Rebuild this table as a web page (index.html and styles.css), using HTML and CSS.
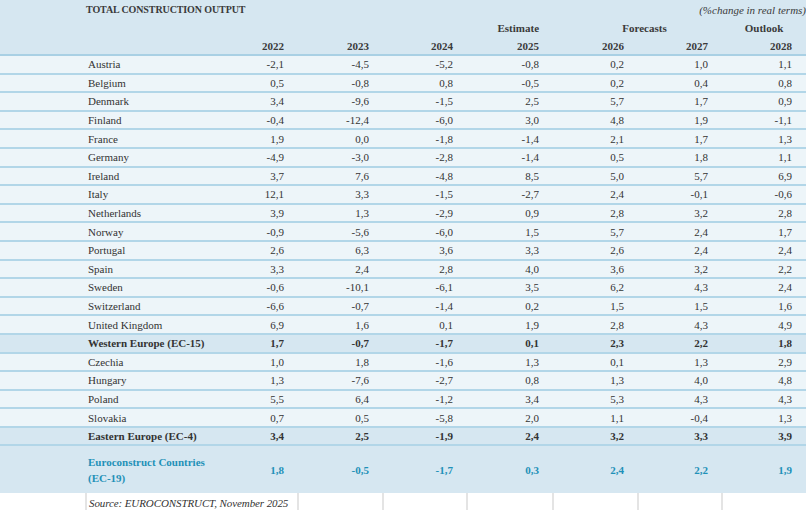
FILE: index.html
```html
<!DOCTYPE html>
<html>
<head>
<meta charset="utf-8">
<link rel="stylesheet" href="styles.css">
</head>
<body>
<table class="tbl">
  <colgroup>
    <col class="c-pad"><col class="c-label">
    <col class="c-85"><col class="c-85"><col class="c-84"><col class="c-86"><col class="c-85"><col class="c-84"><col class="c-84">
  </colgroup>
  <thead>
    <tr class="h1">
      <th></th>
      <th class="title" colspan="4">TOTAL CONSTRUCTION OUTPUT</th>
      <th colspan="4" class="unit">(%change in real terms)</th>
    </tr>
    <tr class="h2">
      <th></th><th></th><th></th><th></th><th></th>
      <th class="num">Estimate</th>
      <th colspan="2" class="fc">Forecasts</th>
      <th class="ol">Outlook</th>
    </tr>
    <tr class="h3">
      <th></th><th></th>
      <th class="num">2022</th><th class="num">2023</th><th class="num">2024</th><th class="num">2025</th><th class="num">2026</th><th class="num">2027</th><th class="num">2028</th>
    </tr>
  </thead>
  <tbody>
    <tr><td></td><td class="lbl">Austria</td><td>-2,1</td><td>-4,5</td><td>-5,2</td><td>-0,8</td><td>0,2</td><td>1,0</td><td>1,1</td></tr>
    <tr><td></td><td class="lbl">Belgium</td><td>0,5</td><td>-0,8</td><td>0,8</td><td>-0,5</td><td>0,2</td><td>0,4</td><td>0,8</td></tr>
    <tr><td></td><td class="lbl">Denmark</td><td>3,4</td><td>-9,6</td><td>-1,5</td><td>2,5</td><td>5,7</td><td>1,7</td><td>0,9</td></tr>
    <tr><td></td><td class="lbl">Finland</td><td>-0,4</td><td>-12,4</td><td>-6,0</td><td>3,0</td><td>4,8</td><td>1,9</td><td>-1,1</td></tr>
    <tr><td></td><td class="lbl">France</td><td>1,9</td><td>0,0</td><td>-1,8</td><td>-1,4</td><td>2,1</td><td>1,7</td><td>1,3</td></tr>
    <tr><td></td><td class="lbl">Germany</td><td>-4,9</td><td>-3,0</td><td>-2,8</td><td>-1,4</td><td>0,5</td><td>1,8</td><td>1,1</td></tr>
    <tr><td></td><td class="lbl">Ireland</td><td>3,7</td><td>7,6</td><td>-4,8</td><td>8,5</td><td>5,0</td><td>5,7</td><td>6,9</td></tr>
    <tr><td></td><td class="lbl">Italy</td><td>12,1</td><td>3,3</td><td>-1,5</td><td>-2,7</td><td>2,4</td><td>-0,1</td><td>-0,6</td></tr>
    <tr><td></td><td class="lbl">Netherlands</td><td>3,9</td><td>1,3</td><td>-2,9</td><td>0,9</td><td>2,8</td><td>3,2</td><td>2,8</td></tr>
    <tr><td></td><td class="lbl">Norway</td><td>-0,9</td><td>-5,6</td><td>-6,0</td><td>1,5</td><td>5,7</td><td>2,4</td><td>1,7</td></tr>
    <tr><td></td><td class="lbl">Portugal</td><td>2,6</td><td>6,3</td><td>3,6</td><td>3,3</td><td>2,6</td><td>2,4</td><td>2,4</td></tr>
    <tr><td></td><td class="lbl">Spain</td><td>3,3</td><td>2,4</td><td>2,8</td><td>4,0</td><td>3,6</td><td>3,2</td><td>2,2</td></tr>
    <tr><td></td><td class="lbl">Sweden</td><td>-0,6</td><td>-10,1</td><td>-6,1</td><td>3,5</td><td>6,2</td><td>4,3</td><td>2,4</td></tr>
    <tr><td></td><td class="lbl">Switzerland</td><td>-6,6</td><td>-0,7</td><td>-1,4</td><td>0,2</td><td>1,5</td><td>1,5</td><td>1,6</td></tr>
    <tr><td></td><td class="lbl">United Kingdom</td><td>6,9</td><td>1,6</td><td>0,1</td><td>1,9</td><td>2,8</td><td>4,3</td><td>4,9</td></tr>
    <tr class="sub"><td></td><td class="lbl">Western Europe (EC-15)</td><td>1,7</td><td>-0,7</td><td>-1,7</td><td>0,1</td><td>2,3</td><td>2,2</td><td>1,8</td></tr>
    <tr><td></td><td class="lbl">Czechia</td><td>1,0</td><td>1,8</td><td>-1,6</td><td>1,3</td><td>0,1</td><td>1,3</td><td>2,9</td></tr>
    <tr><td></td><td class="lbl">Hungary</td><td>1,3</td><td>-7,6</td><td>-2,7</td><td>0,8</td><td>1,3</td><td>4,0</td><td>4,8</td></tr>
    <tr><td></td><td class="lbl">Poland</td><td>5,5</td><td>6,4</td><td>-1,2</td><td>3,4</td><td>5,3</td><td>4,3</td><td>4,3</td></tr>
    <tr><td></td><td class="lbl">Slovakia</td><td>0,7</td><td>0,5</td><td>-5,8</td><td>2,0</td><td>1,1</td><td>-0,4</td><td>1,3</td></tr>
    <tr class="sub"><td></td><td class="lbl">Eastern Europe (EC-4)</td><td>3,4</td><td>2,5</td><td>-1,9</td><td>2,4</td><td>3,2</td><td>3,3</td><td>3,9</td></tr>
    <tr class="total"><td></td><td class="lbl">Euroconstruct Countries<br>(EC-19)</td><td>1,8</td><td>-0,5</td><td>-1,7</td><td>0,3</td><td>2,4</td><td>2,2</td><td>1,9</td></tr>
  </tbody>
  <tfoot>
    <tr class="src">
      <td></td>
      <td colspan="2" class="srctext">Source: EUROCONSTRUCT, November 2025</td>
      <td></td><td></td><td></td><td></td><td></td><td></td>
    </tr>
  </tfoot>
</table>
</body>
</html>
```

FILE: styles.css
```css
html, body {
  margin: 0;
  padding: 0;
  background: #ffffff;
}

.tbl {
  width: 806px;
  border-collapse: collapse;
  table-layout: fixed;
  font-family: "Liberation Serif", "Times New Roman", serif;
  font-size: 11px;
  color: #333333;
}

.c-pad { width: 86px; }
.c-label { width: 127px; }
.c-85 { width: 85px; }
.c-84 { width: 84px; }
.c-86 { width: 86px; }

.tbl th, .tbl td {
  padding: 0;
  white-space: nowrap;
}

thead tr {
  background: #d6e7f1;
}

thead th {
  font-weight: bold;
  color: #3a3a3a;
}

.h1 { height: 19px; }
.h2 { height: 18px; }
.h3 { height: 18px; }
.h3 th { border-bottom: 2px solid #a9d0e4; vertical-align: middle; }

.title {
  text-align: left;
  padding-left: 2px;
  font-size: 10px;
  letter-spacing: -0.1px;
  vertical-align: middle;
}

.unit {
  text-align: right;
  font-weight: normal;
  font-style: italic;
  padding-right: 3px;
  vertical-align: middle;
}

.num {
  text-align: right;
  padding-right: 14px !important;
}

.fc {
  text-align: center;
  padding-left: 14px !important;
}

.ol {
  text-align: center;
}

tbody tr {
  background: #edf5f9;
  height: 18.6px;
}

tbody td {
  border-bottom: 2px solid #b2d6e8;
  text-align: right;
  padding-right: 14px !important;
  vertical-align: middle;
  line-height: 14px;
}

tbody td.lbl {
  text-align: left;
  padding-left: 2px !important;
  padding-right: 0 !important;
}

tbody tr.sub {
  background: #d6e7f1;
  font-weight: bold;
}

tbody tr.total {
  background: #d6e7f1;
  font-weight: bold;
  color: #1f91b8;
  height: 48px;
}

tbody tr.total td {
  border-bottom: none;
  line-height: 16px;
}

tfoot tr.src {
  background: #ffffff;
  height: 20px;
}

tfoot td {
  border-left: 2px solid #e4e4e4;
}

tfoot td:first-child {
  border-left: none;
}

.srctext {
  font-style: italic;
  letter-spacing: -0.1px;
  padding-left: 2px !important;
  vertical-align: middle;
}
```
